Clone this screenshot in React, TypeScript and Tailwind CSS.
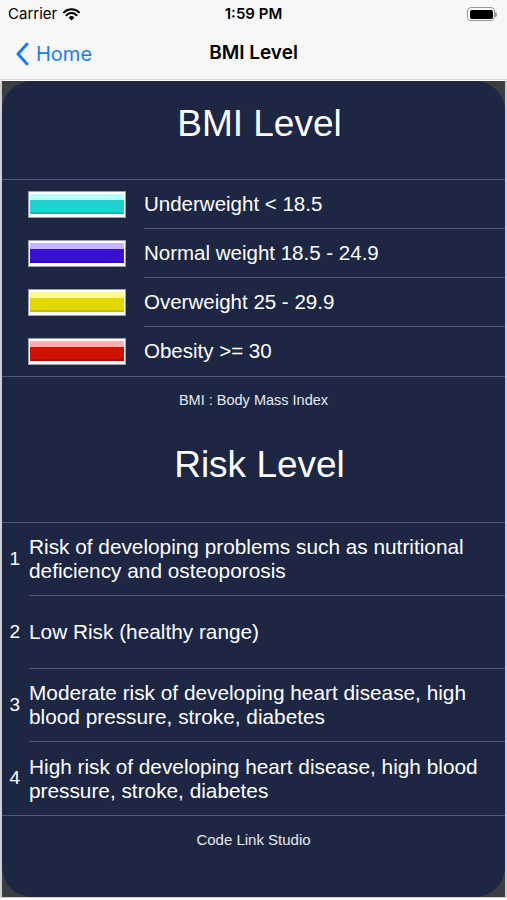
import React from 'react';

const bars = [
  { label: 'Underweight < 18.5', top: 'bg-[#b8fff9]', main: 'bg-[#1ed2cf]', shade: 'bg-[#15b8b5]' },
  { label: 'Normal weight 18.5 - 24.9', top: 'bg-[#c9b4ff]', main: 'bg-[#3a0fd6]', shade: 'bg-[#2f0bb8]' },
  { label: 'Overweight 25 - 29.9', top: 'bg-[#fffb8e]', main: 'bg-[#e2d800]', shade: 'bg-[#c6bd00]' },
  { label: 'Obesity >= 30', top: 'bg-[#ffadad]', main: 'bg-[#d11100]', shade: 'bg-[#b30d00]' },
];

const risks = [
  'Risk of developing problems such as nutritional deficiency and osteoporosis',
  'Low Risk (healthy range)',
  'Moderate risk of developing heart disease, high blood pressure, stroke, diabetes',
  'High risk of developing heart disease, high blood pressure, stroke, diabetes',
];

const GlossBar: React.FC<{ top: string; main: string; shade: string }> = ({ top, main, shade }) => (
  <div className="w-[98px] h-[27px] border border-[#9aa0ad] bg-white flex flex-col px-[1px] pt-[2px] pb-[3px] shrink-0">
    <div className={`h-[6px] ${top}`} />
    <div className={`flex-1 ${main}`} />
    <div className={`h-[2px] ${shade}`} />
  </div>
);

export default function App() {
  return (
    <div className="w-[507px] h-[900px] bg-white flex flex-col overflow-hidden font-['Liberation_Sans',Arial,sans-serif]">
      {/* status bar */}
      <div className="h-[28px] bg-[#f7f7f7] flex items-center justify-between px-[8px] text-[15px] text-black relative">
        <div className="flex items-center gap-[6px]">
          <span className="font-['Inter',sans-serif]">Carrier</span>
          <svg width="17" height="13" viewBox="0 0 17 13">
            <path d="M8.5 12.5 L5.6 9.4 A4.2 4.2 0 0 1 11.4 9.4 Z" fill="#000" />
            <path d="M3.4 7.2 A7.3 7.3 0 0 1 13.6 7.2" stroke="#000" strokeWidth="2" fill="none" strokeLinecap="round" />
            <path d="M1 4.4 A10.8 10.8 0 0 1 16 4.4" stroke="#000" strokeWidth="2" fill="none" strokeLinecap="round" />
          </svg>
        </div>
        <span className="absolute left-1/2 -translate-x-1/2 font-semibold font-['Inter',sans-serif]">1:59 PM</span>
        <div className="flex items-center mr-[2px]">
          <div className="w-[28px] h-[14px] border border-[#9a9a9a] rounded-[4px] p-[1.5px]">
            <div className="w-full h-full bg-black rounded-[2px]" />
          </div>
          <div className="w-[2px] h-[5px] bg-[#9a9a9a] rounded-r-sm" />
        </div>
      </div>

      {/* nav bar */}
      <div className="h-[52px] bg-[#f7f7f7] border-b border-[#d4d4d4] flex items-center relative">
        <div className="flex items-center gap-[7px] pl-[15px] text-[#1a7cf5]">
          <svg width="14" height="24" viewBox="0 0 14 24">
            <path d="M12 2 L3 12 L12 22" stroke="#1a7cf5" strokeWidth="3" fill="none" strokeLinecap="round" strokeLinejoin="round" />
          </svg>
          <span className="text-[20px] font-['Inter',sans-serif]">Home</span>
        </div>
        <span className="absolute left-1/2 -translate-x-1/2 text-[19px] font-semibold text-black font-['Inter',sans-serif]">BMI Level</span>
      </div>

      {/* framed panel */}
      <div className="flex-1 bg-[#3b3d42] border-x-[2px] border-b border-[#cfcfcf] mt-[1px] mb-[2px]">
        <div className="h-full bg-[#1d2743] rounded-[30px] flex flex-col text-white">
          <div className="h-[98px] flex items-center justify-center text-[37px] pb-[12px] pl-[12px]">BMI Level</div>
          <div className="h-px bg-[#4e5877]" />

          {bars.map((b, i) => (
            <div key={b.label} className="h-[49px] flex items-center">
              <div className="pl-[26px] pr-[18px]">
                <GlossBar top={b.top} main={b.main} shade={b.shade} />
              </div>
              <div className={`flex-1 h-full flex items-center text-[20.5px] ${i < bars.length - 1 ? 'border-b border-[#4e5877]' : ''}`}>
                {b.label}
              </div>
            </div>
          ))}
          <div className="h-px bg-[#4e5877]" />

          <div className="h-[48px] flex items-center justify-center text-[14.5px] text-[#e6e9f0]">BMI : Body Mass Index</div>
          <div className="h-[97px] flex items-center justify-center text-[37px] pb-[18px] pl-[12px]">Risk Level</div>
          <div className="h-px bg-[#4e5877]" />

          {risks.map((r, i) => (
            <div key={i} className="h-[73px] flex items-center">
              <span className="w-[27px] text-right pr-[9px] text-[19px]">{i + 1}</span>
              <div className={`flex-1 h-full flex items-center text-[20.8px] leading-[24px] pr-[16px] ${i < risks.length - 1 ? 'border-b border-[#4e5877]' : ''}`}>
                {r}
              </div>
            </div>
          ))}
          <div className="h-px bg-[#4e5877]" />

          <div className="h-[48px] flex items-center justify-center text-[15px] text-[#e6e9f0]">Code Link Studio</div>
        </div>
      </div>
    </div>
  );
}
